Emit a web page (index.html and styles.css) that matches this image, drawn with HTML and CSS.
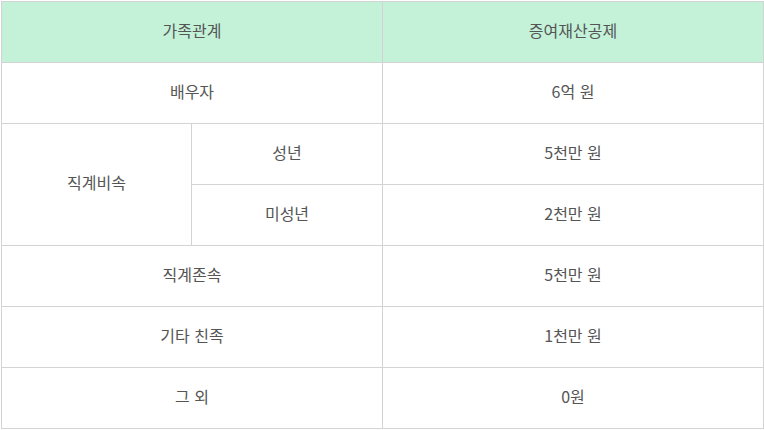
FILE: index.html
```html
<!DOCTYPE html>
<html lang="ko">
<head>
<meta charset="utf-8">
<link rel="stylesheet" href="styles.css">
</head>
<body>
<table class="tbl">
  <colgroup>
    <col class="c1"><col class="c2"><col class="c3">
  </colgroup>
  <thead>
    <tr><th colspan="2">가족관계</th><th>증여재산공제</th></tr>
  </thead>
  <tbody>
    <tr><td colspan="2">배우자</td><td>6억 원</td></tr>
    <tr><td rowspan="2">직계비속</td><td>성년</td><td>5천만 원</td></tr>
    <tr><td>미성년</td><td>2천만 원</td></tr>
    <tr><td colspan="2">직계존속</td><td>5천만 원</td></tr>
    <tr><td colspan="2">기타 친족</td><td>1천만 원</td></tr>
    <tr><td colspan="2">그 외</td><td>0원</td></tr>
  </tbody>
</table>
</body>
</html>
```
FILE: styles.css
```css
html, body { margin: 0; padding: 0; background: #fff; }
body { padding: 1px 0 0 1px; }
.tbl {
  border-collapse: collapse;
  table-layout: fixed;
  width: 762px;
  font-family: "Noto Sans CJK KR", "Noto Sans", sans-serif;
  font-size: 16px;
  color: #555;
}
.c1 { width: 190px; }
.c2 { width: 191px; }
.c3 { width: 381px; }
.tbl th, .tbl td {
  border: 1px solid #d3d3d3;
  height: 55px;
  padding: 0 0 5px;
  text-align: center;
  vertical-align: middle;
  font-weight: normal;
  line-height: 20px;
}
.tbl th { background: #c3f2d9; }
```
